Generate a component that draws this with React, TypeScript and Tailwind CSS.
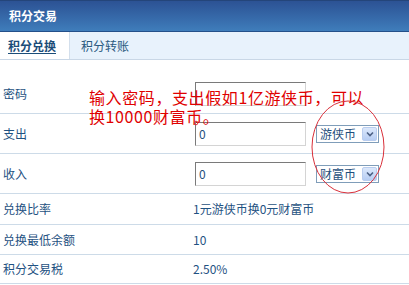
import React from "react";

const font = { fontFamily: '"Noto Sans CJK SC", "Liberation Sans", sans-serif' };

function Select({ label }: { label: string }) {
  return (
    <div className="ml-[10px] flex h-[18px] w-[63px] items-center border border-[#7f9db9] bg-white">
      <span className="flex-1 pl-[3px] text-[12px] leading-none text-[#1f4f7c]">{label}</span>
      <span className="mr-[1px] flex h-[14px] w-[15px] items-center justify-center rounded-[2px] border border-[#b9cdef] bg-gradient-to-b from-[#dce8fb] to-[#b7cdf3]">
        <svg width="8" height="6" viewBox="0 0 8 6">
          <path d="M1 1.5 L4 4.5 L7 1.5" fill="none" stroke="#4d6185" strokeWidth="1.6" />
        </svg>
      </span>
    </div>
  );
}

function Input() {
  return (
    <div className="flex h-[24px] w-[111px] items-center border border-t-[#7a7a7a] border-l-[#7a7a7a] border-r-[#d4d4d4] border-b-[#d4d4d4] bg-white pl-[3px] text-[12px] text-[#1f4f7c]">
      0
    </div>
  );
}

export default function App() {
  return (
    <div className="relative h-[285px] w-[409px] overflow-hidden bg-white text-[12px] text-[#1f5282]" style={font}>
      {/* header */}
      <div className="flex h-[32px] items-center border-t border-b border-t-[#24457a] border-b-[#24508a] bg-gradient-to-b from-[#2c5294] to-[#3f7dbb] pl-[9px] text-[12px] font-bold text-white">
        积分交易
      </div>
      {/* tabs */}
      <div className="flex h-[28px] border-b border-[#c9d7e6] bg-[#e8f2fc]">
        <div className="flex w-[70px] items-center border-r border-[#d3dfec] bg-white pl-[8px] font-bold text-[#1b4d78] underline underline-offset-2">
          积分兑换
        </div>
        <div className="flex items-center pl-[11px] text-[#2b5a80]">积分转账</div>
      </div>

      {/* rows */}
      <div className="flex h-[54px] items-center border-b border-[#cddbe8] pt-[14px]">
        <span className="w-[195px] pl-[3px]">密码</span>
        <div className="h-[24px] w-[111px] border border-t-[#7a7a7a] border-l-[#7a7a7a] border-r-[#d4d4d4] border-b-[#d4d4d4] bg-white" />
      </div>
      <div className="flex h-[40px] items-center border-b border-[#cddbe8]">
        <span className="w-[195px] pl-[3px]">支出</span>
        <Input />
        <Select label="游侠币" />
      </div>
      <div className="flex h-[40px] items-center border-b border-[#cddbe8]">
        <span className="w-[195px] pl-[3px]">收入</span>
        <Input />
        <Select label="财富币" />
      </div>
      <div className="flex h-[31px] items-center border-b border-[#cddbe8]">
        <span className="w-[193px] pl-[3px]">兑换比率</span>
        <span>1元游侠币换0元财富币</span>
      </div>
      <div className="flex h-[30px] items-center border-b border-[#cddbe8]">
        <span className="w-[193px] pl-[3px]">兑换最低余额</span>
        <span>10</span>
      </div>
      <div className="flex h-[29px] items-center border-b border-[#cddbe8]">
        <span className="w-[193px] pl-[3px]">积分交易税</span>
        <span>2.50%</span>
      </div>

      {/* annotation */}
      <div className="absolute left-[89px] top-[88px] text-[16px] leading-[19px] tracking-[0.6px] text-[#e00000]">
        <div>输入密码，支出假如1亿游侠币，可以</div>
        <div>换10000财富币。</div>
      </div>
      <svg className="absolute left-0 top-0" width="409" height="285">
        <ellipse cx="348" cy="147" rx="36" ry="46" fill="none" stroke="#d9303a" strokeWidth="1" />
        <circle cx="196" cy="123" r="1.8" fill="none" stroke="#d9303a" strokeWidth="1" />
      </svg>
    </div>
  );
}
